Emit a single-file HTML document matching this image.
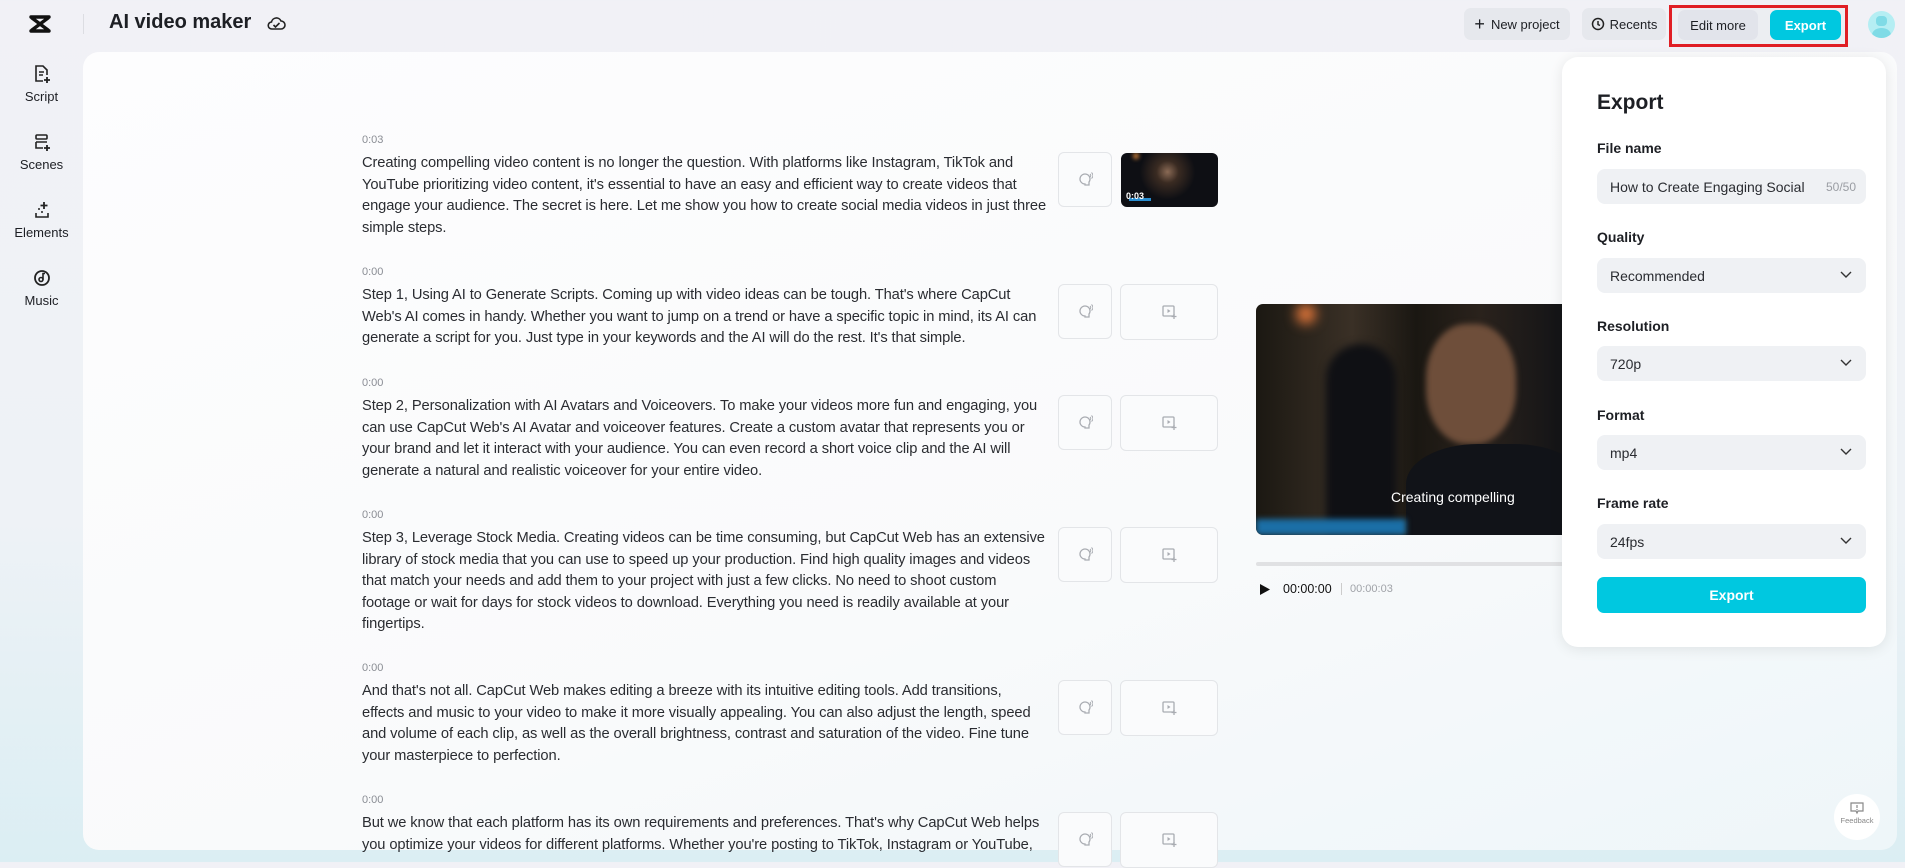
<!DOCTYPE html>
<html><head><meta charset="utf-8"><style>
*{margin:0;padding:0;box-sizing:border-box}
body{width:1905px;height:862px;overflow:hidden;font-family:"Liberation Sans",sans-serif;color:#1d1f24;background:linear-gradient(180deg,#f1f1f6 0%,#eef2f6 60%,#dbeef3 100%);position:relative}
.abs{position:absolute}
.card{left:83px;top:52px;width:1814px;height:798px;border-radius:16px;background:linear-gradient(160deg,#fdfdfe 0%,#f9fafb 60%,#eef6f9 100%)}
.nav{width:83px;text-align:center;font-size:13px;color:#1d1f24}
.nav svg{display:block;margin:0 auto 5px}
.tbtn{height:32px;border-radius:7px;background:#e6e8ed;font-size:13px;display:flex;align-items:center;justify-content:center;top:8px}
.row{left:362px;white-space:nowrap}
.time{font-size:11px;color:#8a8d94;}
.txt{font-size:14.7px;line-height:21.6px;color:#2a2c31;margin-top:7px;letter-spacing:-0.1px}
.vb{left:1058px;width:54px;height:55px;border:1px solid #e3e5e8;border-radius:6px;background:#fafbfc}
.ib{left:1120px;width:98px;height:56px;border:1px solid #e3e5e8;border-radius:6px;background:#fafbfc}
.panel{left:1562px;top:57px;width:324px;height:590px;background:#fff;border-radius:16px;box-shadow:0 2px 14px rgba(0,0,0,.09)}
.lbl{left:35px;font-size:14px;font-weight:bold;color:#1d1f24}
.sel{left:35px;width:269px;height:35px;border-radius:8px;background:#eff1f4;font-size:14px;color:#2a2c31;padding-left:13px;display:flex;align-items:center}
.sel svg{position:absolute;right:14px;top:13px}
</style></head><body>
<div class="abs card"></div>

<!-- top bar -->
<svg class="abs" style="left:28px;top:14px" width="24" height="20" viewBox="0 0 24 20"><path d="M3 3h18M3 17h18M4 4l16 12M20 4L4 16" fill="none" stroke="#111" stroke-width="3.4" stroke-linecap="round"/></svg>
<div class="abs" style="left:83px;top:14px;width:1px;height:20px;background:#dcdde2"></div>
<div class="abs" style="left:109px;top:11px;font-size:20px;font-weight:bold;color:#1d1f24">AI video maker</div>
<svg class="abs" style="left:267px;top:15px" width="19" height="17" viewBox="0 0 19 17"><path d="M5 14h9a4 4 0 0 0 0-8 5 5 0 0 0-9.5 1A3.5 3.5 0 0 0 5 14z" fill="none" stroke="#222" stroke-width="1.6"/><path d="M6.5 10l2 2 4-4" fill="none" stroke="#222" stroke-width="1.6"/></svg>

<div class="abs tbtn" style="left:1464px;width:106px"><span style="font-size:18px;margin-right:6px;font-weight:300">+</span>New project</div>
<div class="abs tbtn" style="left:1582px;width:84px"><svg width="14" height="14" viewBox="0 0 14 14" style="margin-right:5px"><circle cx="7" cy="7" r="5.5" fill="none" stroke="#222" stroke-width="1.5"/><path d="M7 4v3.5l2 1" fill="none" stroke="#222" stroke-width="1.5"/></svg>Recents</div>
<div class="abs" style="left:1669px;top:5px;width:179px;height:42px;border:3px solid #e01e24;background:#eceef2"></div>
<div class="abs tbtn" style="left:1678px;top:10px;width:80px;height:30px;background:#e2e4eb">Edit more</div>
<div class="abs tbtn" style="left:1770px;top:10px;width:71px;height:30px;background:#00c8e0;color:#fff;font-weight:bold">Export</div>
<div class="abs" style="left:1868px;top:11px;width:27px;height:27px;border-radius:50%;background:#b5eef3;overflow:hidden"><div class="abs" style="left:8px;top:5px;width:11px;height:10px;border-radius:4px;background:#7fdbe6"></div><div class="abs" style="left:4px;top:17px;width:19px;height:14px;border-radius:50%;background:#7fdbe6"></div></div>

<!-- sidebar -->
<div class="abs nav" style="left:0;top:64px"><svg width="18" height="20" viewBox="0 0 18 20"><path d="M10 17H3V2h7l4 4v5" fill="none" stroke="#222" stroke-width="1.6"/><path d="M6 8h5M6 11h4" stroke="#222" stroke-width="1.6"/><path d="M14 13v6M11 16h6" stroke="#222" stroke-width="1.8"/></svg>Script</div>
<div class="abs nav" style="left:0;top:132px"><svg width="18" height="20" viewBox="0 0 18 20"><rect x="3" y="3" width="11" height="4" rx="1" fill="none" stroke="#222" stroke-width="1.6"/><path d="M3 10h11M3 10v6h7" fill="none" stroke="#222" stroke-width="1.6"/><path d="M14 13v6M11 16h6" stroke="#222" stroke-width="1.8"/></svg>Scenes</div>
<div class="abs nav" style="left:0;top:200px"><svg width="18" height="20" viewBox="0 0 18 20"><path d="M3 13v4h12v-4" fill="none" stroke="#222" stroke-width="1.6"/><path d="M11 2v7M7.5 5.5h7" stroke="#222" stroke-width="1.8"/><circle cx="6" cy="9" r="1" fill="#222"/><circle cx="9" cy="12" r="1" fill="#222"/></svg>Elements</div>
<div class="abs nav" style="left:0;top:268px"><svg width="18" height="20" viewBox="0 0 18 20"><circle cx="9" cy="10" r="7" fill="none" stroke="#222" stroke-width="1.8"/><circle cx="8" cy="11.5" r="2" fill="none" stroke="#222" stroke-width="1.6"/><path d="M10 11.5V5.5h2" fill="none" stroke="#222" stroke-width="1.6"/></svg>Music</div>

<!-- script rows -->
<div class="abs row" style="top:134px"><div class="time">0:03</div><div class="txt">Creating compelling video content is no longer the question. With platforms like Instagram, TikTok and<br>YouTube prioritizing video content, it's essential to have an easy and efficient way to create videos that<br>engage your audience. The secret is here. Let me show you how to create social media videos in just three<br>simple steps.</div></div>
<div class="abs row" style="top:266px"><div class="time">0:00</div><div class="txt">Step 1, Using AI to Generate Scripts. Coming up with video ideas can be tough. That's where CapCut<br>Web's AI comes in handy. Whether you want to jump on a trend or have a specific topic in mind, its AI can<br>generate a script for you. Just type in your keywords and the AI will do the rest. It's that simple.</div></div>
<div class="abs row" style="top:377px"><div class="time">0:00</div><div class="txt">Step 2, Personalization with AI Avatars and Voiceovers. To make your videos more fun and engaging, you<br>can use CapCut Web's AI Avatar and voiceover features. Create a custom avatar that represents you or<br>your brand and let it interact with your audience. You can even record a short voice clip and the AI will<br>generate a natural and realistic voiceover for your entire video.</div></div>
<div class="abs row" style="top:509px"><div class="time">0:00</div><div class="txt">Step 3, Leverage Stock Media. Creating videos can be time consuming, but CapCut Web has an extensive<br>library of stock media that you can use to speed up your production. Find high quality images and videos<br>that match your needs and add them to your project with just a few clicks. No need to shoot custom<br>footage or wait for days for stock videos to download. Everything you need is readily available at your<br>fingertips.</div></div>
<div class="abs row" style="top:662px"><div class="time">0:00</div><div class="txt">And that's not all. CapCut Web makes editing a breeze with its intuitive editing tools. Add transitions,<br>effects and music to your video to make it more visually appealing. You can also adjust the length, speed<br>and volume of each clip, as well as the overall brightness, contrast and saturation of the video. Fine tune<br>your masterpiece to perfection.</div></div>
<div class="abs row" style="top:794px"><div class="time">0:00</div><div class="txt">But we know that each platform has its own requirements and preferences. That's why CapCut Web helps<br>you optimize your videos for different platforms. Whether you're posting to TikTok, Instagram or YouTube,</div></div>

<!-- row buttons -->
<svg width="0" height="0" style="position:absolute"><defs>
<symbol id="vo" viewBox="0 0 16 16"><path d="M8 13a5 5 0 1 1 4-2v3H8z" fill="none" stroke="#a9acb2" stroke-width="1.3"/><path d="M13 3q1.5 1.5 0 3M14.5 1.5q3 3 0 6" fill="none" stroke="#a9acb2" stroke-width="1"/></symbol>
<symbol id="md" viewBox="0 0 16 16"><rect x="2" y="2" width="11" height="10" rx="1" fill="none" stroke="#a9acb2" stroke-width="1.3"/><path d="M6.5 5v4l3-2z" fill="#a9acb2"/><path d="M13 10v5M10.5 12.5h5" stroke="#a9acb2" stroke-width="1.3"/></symbol></defs></svg>
<div class="abs vb" style="top:152px"><svg class="abs" style="left:18px;top:18px" width="16" height="16"><use href="#vo"/></svg></div>
<div class="abs" style="left:1121px;top:153px;width:97px;height:54px;border-radius:6px;overflow:hidden;background:radial-gradient(circle at 48% 35%,#8a6a55 0,#3a2b22 18%,#0e0f14 45%),#0b0c10"><div class="abs" style="left:12px;top:0;width:6px;height:6px;background:#d7853a;border-radius:50%;filter:blur(2px)"></div><div class="abs" style="left:8px;top:45px;width:22px;height:3px;background:#2a8ed0"></div><div class="abs" style="left:5px;top:38px;font-size:9px;color:#fff;font-weight:bold">0:03</div></div>
<div class="abs vb" style="top:284px"><svg class="abs" style="left:18px;top:18px" width="16" height="16"><use href="#vo"/></svg></div>
<div class="abs ib" style="top:284px"><svg class="abs" style="left:40px;top:19px" width="16" height="16"><use href="#md"/></svg></div>
<div class="abs vb" style="top:395px"><svg class="abs" style="left:18px;top:18px" width="16" height="16"><use href="#vo"/></svg></div>
<div class="abs ib" style="top:395px"><svg class="abs" style="left:40px;top:19px" width="16" height="16"><use href="#md"/></svg></div>
<div class="abs vb" style="top:527px"><svg class="abs" style="left:18px;top:18px" width="16" height="16"><use href="#vo"/></svg></div>
<div class="abs ib" style="top:527px"><svg class="abs" style="left:40px;top:19px" width="16" height="16"><use href="#md"/></svg></div>
<div class="abs vb" style="top:680px"><svg class="abs" style="left:18px;top:18px" width="16" height="16"><use href="#vo"/></svg></div>
<div class="abs ib" style="top:680px"><svg class="abs" style="left:40px;top:19px" width="16" height="16"><use href="#md"/></svg></div>
<div class="abs vb" style="top:812px"><svg class="abs" style="left:18px;top:18px" width="16" height="16"><use href="#vo"/></svg></div>
<div class="abs ib" style="top:812px"><svg class="abs" style="left:40px;top:19px" width="16" height="16"><use href="#md"/></svg></div>

<!-- preview -->
<div class="abs" style="left:1256px;top:304px;width:320px;height:231px;border-radius:7px;overflow:hidden;background:linear-gradient(90deg,#1b1812 0%,#3a3026 30%,#1a1712 50%,#2a221c 70%,#101216 100%)">
<div class="abs" style="left:40px;top:0;width:20px;height:20px;border-radius:50%;background:#e0763a;filter:blur(6px)"></div>
<div class="abs" style="left:70px;top:40px;width:70px;height:190px;border-radius:35px 35px 0 0;background:#0f1014;filter:blur(4px)"></div>
<div class="abs" style="left:170px;top:20px;width:90px;height:120px;border-radius:45%;background:#6e4e3a;filter:blur(3px)"></div>
<div class="abs" style="left:150px;top:140px;width:180px;height:100px;border-radius:40% 40% 0 0;background:#111318"></div>
<div class="abs" style="left:0;top:215px;width:150px;height:16px;background:#1b6fa6;filter:blur(3px)"></div>
<div class="abs" style="left:135px;top:185px;font-size:14px;color:#fff">Creating compelling</div>
</div>
<div class="abs" style="left:1256px;top:562px;width:320px;height:4px;border-radius:2px;background:#e0e1e3"></div>
<svg class="abs" style="left:1259px;top:583px" width="12" height="13" viewBox="0 0 12 13"><path d="M1 1l10 5.5L1 12z" fill="#111"/></svg>
<div class="abs" style="left:1283px;top:582px;font-size:12.5px;color:#111">00:00:00</div>
<div class="abs" style="left:1341px;top:583px;width:1px;height:12px;background:#ccc"></div>
<div class="abs" style="left:1350px;top:583px;font-size:11px;color:#a0a3a8">00:00:03</div>

<!-- export panel -->
<div class="abs panel">
<div class="abs" style="left:35px;top:34px;font-size:21px;font-weight:bold;color:#1d1f24">Export</div>
<div class="abs lbl" style="top:83px">File name</div>
<div class="abs sel" style="top:112px">How to Create Engaging Social<span class="abs" style="right:10px;font-size:12px;color:#9a9da3">50/50</span></div>
<div class="abs lbl" style="top:172px">Quality</div>
<div class="abs sel" style="top:201px">Recommended<svg width="12" height="8" viewBox="0 0 12 8"><path d="M1 1l5 5 5-5" fill="none" stroke="#333" stroke-width="1.4"/></svg></div>
<div class="abs lbl" style="top:261px">Resolution</div>
<div class="abs sel" style="top:289px">720p<svg width="12" height="8" viewBox="0 0 12 8"><path d="M1 1l5 5 5-5" fill="none" stroke="#333" stroke-width="1.4"/></svg></div>
<div class="abs lbl" style="top:350px">Format</div>
<div class="abs sel" style="top:378px">mp4<svg width="12" height="8" viewBox="0 0 12 8"><path d="M1 1l5 5 5-5" fill="none" stroke="#333" stroke-width="1.4"/></svg></div>
<div class="abs lbl" style="top:438px">Frame rate</div>
<div class="abs sel" style="top:467px">24fps<svg width="12" height="8" viewBox="0 0 12 8"><path d="M1 1l5 5 5-5" fill="none" stroke="#333" stroke-width="1.4"/></svg></div>
<div class="abs" style="left:35px;top:520px;width:269px;height:36px;border-radius:7px;background:#00c8e0;color:#fff;font-weight:bold;font-size:14px;display:flex;align-items:center;justify-content:center">Export</div>
</div>

<!-- feedback -->
<div class="abs" style="left:1834px;top:794px;width:46px;height:46px;border-radius:50%;background:#fff;text-align:center">
<svg style="display:block;margin:8px auto 1px" width="14" height="13" viewBox="0 0 14 13"><path d="M1 1h12v8H8l-1 2-1-2H1z" fill="none" stroke="#888" stroke-width="1.2"/><path d="M7 3v3M7 7v1" stroke="#888" stroke-width="1.2"/></svg>
<div style="font-size:7.5px;color:#888">Feedback</div></div>
</body></html>
